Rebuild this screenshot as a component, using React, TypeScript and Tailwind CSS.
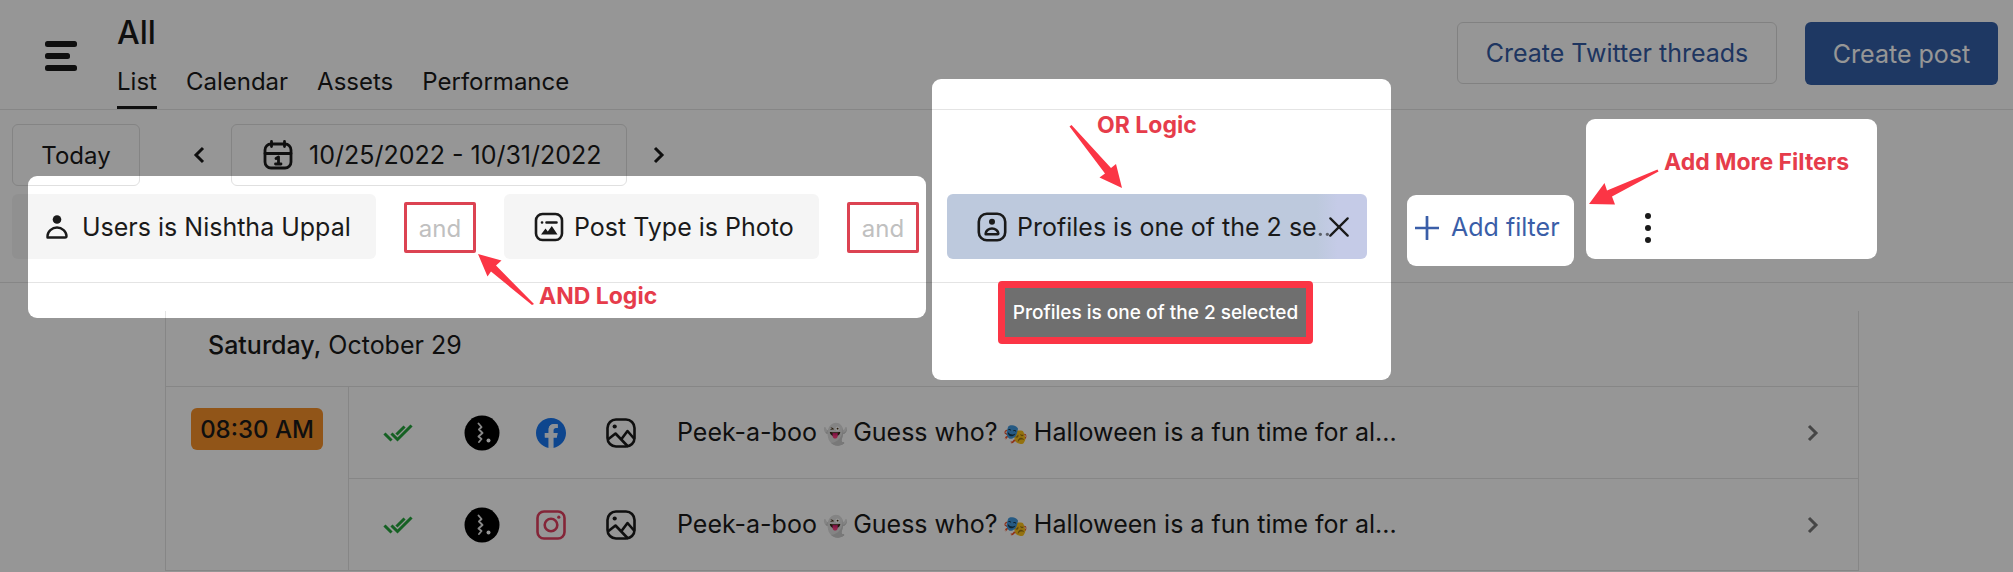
import React from "react";

type Hole = { x: number; y: number; w: number; h: number };

const holes: Hole[] = [
  { x: 28, y: 176, w: 898, h: 142 },
  { x: 932, y: 79, w: 459, h: 301 },
  { x: 1407, y: 195, w: 167, h: 71 },
  { x: 1586, y: 119, w: 291, h: 140 },
];

const tabs = ["List", "Calendar", "Assets", "Performance"];

const Stroke = ({
  children,
  className,
  width = 2.4,
}: {
  children: React.ReactNode;
  className: string;
  width?: number;
}) => (
  <svg
    viewBox="0 0 30 30"
    className={className}
    fill="none"
    stroke="currentColor"
    strokeWidth={width}
    strokeLinecap="round"
    strokeLinejoin="round"
    aria-hidden="true"
  >
    {children}
  </svg>
);

const CalendarIcon = () => (
  <Stroke className="size-[30px]" width={2.8}>
    <rect x="2" y="4" width="26" height="24" rx="6" />
    <path d="M2 13.500h26M8.500 1.500v5M21.500 1.500v5" />
    <path d="M13 18.500l2.500-1.500v7M12.500 24h5.500" />
  </Stroke>
);

const UserIcon = () => (
  <Stroke className="size-[30px]" width={2.4}>
    <circle cx="15" cy="7.500" r="4.300" fill="currentColor" stroke="none" />
    <path d="M5.500 25.500v-1.500c0-4.500 4.500-8.500 9.500-8.500s9.500 4 9.500 8.500c0 1-.5 1.500-1.500 1.500z" />
  </Stroke>
);

const PostTypeIcon = () => (
  <Stroke className="size-[30px]" width={2.6}>
    <rect x="2" y="2" width="26" height="26" rx="6.500" />
    <path d="M8 10.500h.1M12.500 10.500h10" />
    <path
      d="M7 22.500l4.500-6 2.300 3 4-5.500 5.700 8.500z"
      fill="currentColor"
      stroke="none"
    />
  </Stroke>
);

const ProfileIcon = () => (
  <Stroke className="size-[30px]" width={2.6}>
    <rect x="1.800" y="1.800" width="26.400" height="26.400" rx="8" />
    <circle cx="15" cy="9.800" r="3" fill="currentColor" stroke="none" />
    <path d="M8.700 22.200v-.7c0-2.800 3-5 6.300-5s6.300 2.200 6.300 5c0 .5-.2.700-.7.700z" />
  </Stroke>
);

const PhotoIcon = () => (
  <Stroke className="size-[30px]" width={2.6}>
    <rect x="1.500" y="1.500" width="27" height="27" rx="8.500" />
    <circle cx="8.700" cy="8.500" r="2.100" fill="currentColor" stroke="none" />
    <path d="M2.500 21l7-5.500L21.500 28M15.500 21l6-8 6.500 7.500" />
  </Stroke>
);

const DoubleCheck = () => (
  <svg
    viewBox="0 0 30 20"
    className="h-5 w-[30px] text-[#25a53c]"
    fill="none"
    stroke="currentColor"
    strokeWidth="3"
    strokeLinecap="square"
    aria-label="Published"
  >
    <path d="M2.500 11.500l5 5M9.500 11.500l5 5L27.500 3.500M14.500 10.500l6-6" />
  </svg>
);

const Avatar = () => (
  <svg viewBox="0 0 36 36" className="size-9" aria-label="Profile">
    <circle cx="18" cy="18" r="17.500" fill="#000" />
    <path
      d="M14.500 8.500l3 3.500-2.500 2.500 3.500 3.500-4 3.500 3 2.500-2.500 3"
      fill="none"
      stroke="#e8e8e8"
      strokeWidth="1.900"
      strokeLinecap="round"
      strokeLinejoin="round"
    />
    <circle cx="24.500" cy="25.500" r="2" fill="#fff" />
  </svg>
);

const Facebook = () => (
  <svg viewBox="0 0 24 24" className="size-[30px]" aria-label="Facebook">
    <path
      fill="#1877f2"
      d="M24 12.073c0-6.627-5.373-12-12-12s-12 5.373-12 12c0 5.990 4.388 10.954 10.125 11.854v-8.385H7.078v-3.470h3.047V9.430c0-3.007 1.792-4.669 4.533-4.669 1.312 0 2.686.235 2.686.235v2.953H15.830c-1.491 0-1.956.925-1.956 1.874v2.250h3.328l-.532 3.470h-2.796v8.385C19.612 23.027 24 18.062 24 12.073z"
    />
    <path
      fill="#f0f6ff"
      d="M16.670 15.543l.532-3.470h-3.328v-2.250c0-.949.465-1.874 1.956-1.874h1.514V4.996s-1.374-.235-2.686-.235c-2.741 0-4.533 1.662-4.533 4.669v2.643H7.078v3.470h3.047v8.385a12.090 12.090 0 0 0 3.749 0v-8.385z"
    />
  </svg>
);

const Instagram = () => (
  <Stroke className="size-[30px] text-[#e1405f]" width={2.6}>
    <rect x="1.500" y="1.500" width="27" height="27" rx="6.500" />
    <circle cx="15" cy="15" r="6.300" />
    <circle cx="22.800" cy="7.200" r="1.600" fill="currentColor" stroke="none" />
  </Stroke>
);

const Chevron = ({ left = false }: { left?: boolean }) => (
  <svg
    viewBox="0 0 12 18"
    className="h-[18px] w-3"
    fill="none"
    stroke="currentColor"
    strokeWidth="3"
    aria-hidden="true"
  >
    <path d={left ? "M10 2L3 9l7 7" : "M2 2l7 7-7 7"} />
  </svg>
);

const And = () => (
  <span className="flex h-[51px] w-[72px] items-center justify-center rounded-xs border-3 border-[#dc4352] pt-0.5 text-2xl text-[#c0c0c0]">
    and
  </span>
);

const Header = () => (
  <header className="flex h-[110px] justify-between border-b border-[#e4e4e4]">
    <div className="flex">
      <button aria-label="Menu" className="ml-[45px] h-8 self-center pt-0.5">
        <svg viewBox="0 0 32 30" className="h-[30px] w-8" fill="currentColor">
          <rect y="0" width="32" height="6" rx="2.500" />
          <rect y="12" width="25" height="6" rx="2.500" />
          <rect y="24" width="32" height="6" rx="2.500" />
        </svg>
      </button>
      <div className="ml-10 flex flex-col justify-between">
        <h1 className="pt-[13px] text-[32px] leading-10 font-medium">All</h1>
        <nav className="flex gap-[29px] text-2xl">
          {tabs.map((tab, i) => (
            <a
              key={tab}
              href={`#${tab.toLowerCase()}`}
              className={
                i === 0
                  ? "h-[43px] border-b-3 border-[#1a1a1a] leading-8"
                  : "h-[43px] leading-8"
              }
            >
              {tab}
            </a>
          ))}
        </nav>
      </div>
    </div>
    <div className="flex gap-7 pt-[22px] pr-[15px]">
      <button className="h-[62px] w-[320px] rounded-md border border-[#dcdcdc] pt-0.5 text-[#345ba4]">
        Create Twitter threads
      </button>
      <button className="h-[63px] w-[193px] rounded-md bg-[#345fa9] pt-0.5 text-white">
        Create post
      </button>
    </div>
  </header>
);

const Toolbar = () => (
  <section className="border-b border-[#e4e4e4] pt-3.5 pb-[23px]">
    <div className="flex h-[62px] items-center pl-3">
      <button className="h-[62px] w-32 rounded-md border border-[#e0e0e0] pt-0.5 text-2xl">
        Today
      </button>
      <button aria-label="Previous week" className="ml-[53px]">
        <Chevron left />
      </button>
      <button className="ml-[26px] flex h-[62px] w-[396px] items-center gap-4 rounded-md border border-[#e0e0e0] pl-[31px]">
        <CalendarIcon />
        <span className="pt-0.5">10/25/2022 - 10/31/2022</span>
      </button>
      <button aria-label="Next week" className="ml-[26px]">
        <Chevron />
      </button>
    </div>

    <div className="mt-2 flex h-[65px] items-center pl-3">
      <button className="flex h-[65px] w-[364px] items-center gap-[10px] rounded-md bg-[#f5f5f5] pl-[30px]">
        <UserIcon />
        <span className="pt-0.5">Users is Nishtha Uppal</span>
      </button>
      <div className="px-7 pt-0.5">
        <And />
      </div>
      <button className="flex h-[65px] w-[315px] items-center gap-[10px] rounded-md bg-[#f5f5f5] pl-[30px]">
        <PostTypeIcon />
        <span className="pt-0.5">Post Type is Photo</span>
      </button>
      <div className="px-7 pt-0.5">
        <And />
      </div>
      <div className="relative flex h-[65px] w-[420px] items-center rounded-md bg-linear-to-r from-[#bdc9dd] from-88% to-[#c5cbe7] to-93% pl-[30px]">
        <ProfileIcon />
        <span className="ml-[10px] w-[313px] pt-0.5 whitespace-nowrap">
          Profiles is one of the 2 se<span className="opacity-60">..</span>
        </span>
        <button aria-label="Remove filter" className="absolute right-[18px]">
          <Stroke className="size-5" width={3.4}>
            <path d="M2 2l26 26M28 2L2 28" />
          </Stroke>
        </button>
      </div>
      <button className="ml-12 flex items-center gap-3 pt-0.5 text-[#3a5ea8]">
        <Stroke className="size-6" width={3.4}>
          <path d="M15 1v28M1 15h28" />
        </Stroke>
        Add filter
      </button>
      <button aria-label="More options" className="ml-[84px] pt-0.5">
        <svg viewBox="0 0 8 32" className="h-8 w-2" fill="currentColor">
          <circle cx="4" cy="4" r="3" />
          <circle cx="4" cy="16" r="3" />
          <circle cx="4" cy="28" r="3" />
        </svg>
      </button>
    </div>
  </section>
);

const PostRow = ({ network }: { network: React.ReactNode }) => (
  <li className="flex h-[92px] items-center border-b border-[#e4e4e4] pl-[34px]">
    <DoubleCheck />
    <span className="ml-[51px]">
      <Avatar />
    </span>
    <span className="ml-9">{network}</span>
    <span className="ml-10">
      <PhotoIcon />
    </span>
    <p className="ml-[41px] flex-1 whitespace-nowrap">
      Peek-a-boo<span className="text-xl"> 👻 </span>Guess who?
      <span className="text-xl"> 🎭 </span>Halloween is a fun time for al...
    </p>
    <button aria-label="Open post" className="mr-[39px] text-[#777]">
      <Chevron />
    </button>
  </li>
);

const Agenda = () => (
  <main className="mt-7 mr-[154px] ml-[165px] border-x border-[#e4e4e4]">
    <h2 className="flex h-[76px] items-center border-b border-[#e4e4e4] pb-1.5 pl-[42px] whitespace-pre">
      <span className="font-medium">Saturday,</span> October 29
    </h2>
    <div className="flex">
      <div className="w-[182px] border-b border-[#e4e4e4] pt-[21px] pl-[25px]">
        <time className="flex h-[42px] w-[132px] items-center justify-center rounded-md bg-[#f7912a] pt-0.5 text-2xl font-medium">
          08:30 AM
        </time>
      </div>
      <ul className="flex-1 border-l border-[#e4e4e4]">
        <PostRow network={<Facebook />} />
        <PostRow network={<Instagram />} />
      </ul>
    </div>
  </main>
);

// Dims the page and leaves the highlighted areas at full brightness
const Spotlight = () => (
  <svg
    className="pointer-events-none absolute inset-0 h-full w-full"
    aria-hidden="true"
  >
    <mask id="holes">
      <rect width="100%" height="100%" fill="#fff" />
      {holes.map((h) => (
        <rect
          key={h.x}
          x={h.x}
          y={h.y}
          width={h.w}
          height={h.h}
          rx="9"
          fill="#000"
        />
      ))}
    </mask>
    <rect
      width="100%"
      height="100%"
      fill="#000"
      fillOpacity="0.41"
      mask="url(#holes)"
    />
    <g fill="#fb3545">
      <path d="M478 254L501.500 260.500L496 265.500L534 304L532 305L491 271.500L487.500 276.500Z" />
      <path d="M1122 188L1116 164L1111 168L1071.500 125L1069.500 126.500L1105 173.500L1099.500 177.500Z" />
      <path d="M1589 204L1604.500 183L1607 190.500L1657.500 169.500L1658.500 171.500L1612 196.500L1615 204.500Z" />
    </g>
  </svg>
);

const Notes = () => (
  <div className="pointer-events-none absolute inset-0 text-[23px] leading-7 font-bold whitespace-nowrap text-[#e63c4b]">
    <span className="absolute top-[111px] left-[1097px]">OR Logic</span>
    <span className="absolute top-[282px] left-[539px]">AND Logic</span>
    <span className="absolute top-[148px] left-[1664px]">Add More Filters</span>
    <span
      role="tooltip"
      className="absolute top-[281px] left-[998px] flex h-[63px] w-[315px] items-center justify-center rounded-sm border-7 border-[#fb3545] bg-[#6f6f6f] text-[19px] font-medium text-white"
    >
      Profiles is one of the 2 selected
    </span>
  </div>
);

const App = () => {
  return (
    <div className="relative min-h-screen overflow-hidden bg-white font-[Inter,'Noto_Sans',sans-serif] text-[25px] text-[#1a1a1a]">
      <Header />
      <Toolbar />
      <Agenda />
      <Spotlight />
      <Notes />
    </div>
  );
};

export default App;
